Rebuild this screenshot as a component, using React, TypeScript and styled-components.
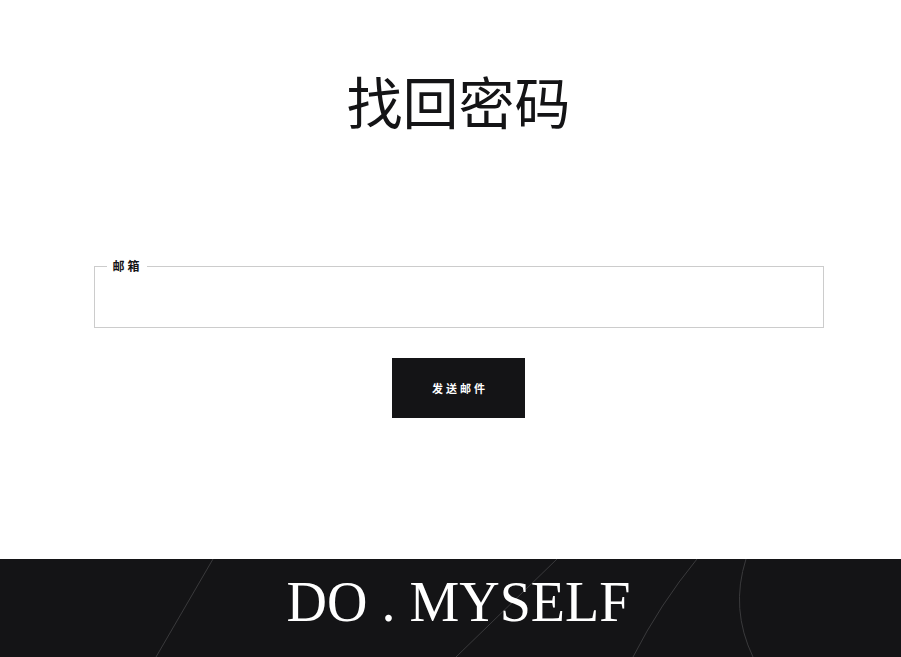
import React from "react";
import styled, { createGlobalStyle } from "styled-components";

const Global = createGlobalStyle`
  html, body { margin: 0; padding: 0; background: #ffffff; }
  body { font-family: "Noto Sans CJK SC", "Noto Sans", sans-serif; color: #141416; }
  * { box-sizing: border-box; }
`;

const Page = styled.div`
  display: flex;
  flex-direction: column;
  min-height: 657px;
`;

const Main = styled.main`
  display: flex;
  flex-direction: column;
  align-items: center;
  padding-left: 16px;
  height: 559px;
`;

const Title = styled.h1`
  margin: 72px 0 0;
  font-size: 56px;
  line-height: 56px;
  font-weight: 400;
  color: #141416;
`;

const Field = styled.fieldset`
  margin: 131px 0 0;
  width: 730px;
  height: 69px;
  border: 1px solid #cccccc;
  padding: 0 12px;
`;

const Legend = styled.legend`
  margin-left: 0;
  padding: 0 4px 0 6px;
  font-size: 12px;
  font-weight: 700;
  letter-spacing: 3px;
  line-height: 14px;
  color: #141416;
`;

const Input = styled.input`
  width: 100%;
  height: 44px;
  border: none;
  outline: none;
  background: transparent;
  font-size: 14px;
`;

const SendButton = styled.button`
  margin-top: 30px;
  width: 133px;
  height: 60px;
  border: none;
  background: #141416;
  color: #ffffff;
  font-family: "Noto Sans CJK SC", sans-serif;
  font-size: 11px;
  font-weight: 700;
  letter-spacing: 3px;
  padding: 0 0 0 3px;
  cursor: pointer;
`;

const Footer = styled.footer`
  position: relative;
  height: 98px;
  background: #141416;
  overflow: hidden;
  display: flex;
  justify-content: center;
  padding-left: 16px;
`;

const Deco = styled.svg`
  position: absolute;
  inset: 0;
  width: 100%;
  height: 100%;
`;

const Brand = styled.div`
  position: relative;
  margin-top: 11px;
  font-family: "Liberation Serif", "Times New Roman", serif;
  font-size: 56px;
  line-height: 64px;
  color: #ffffff;
`;

export default function App() {
  return (
    <Page>
      <Global />
      <Main>
        <Title>找回密码</Title>
        <Field>
          <Legend>邮箱</Legend>
          <Input type="email" />
        </Field>
        <SendButton>发送邮件</SendButton>
      </Main>
      <Footer>
        <Deco viewBox="0 0 901 98" preserveAspectRatio="none">
          <g fill="none" stroke="#3a3a3c" strokeWidth="1">
            <line x1="213" y1="0" x2="156" y2="98" />
            <line x1="557" y1="0" x2="456" y2="98" />
            <path d="M697 0 Q660 45 633 98" />
            <path d="M746 0 Q730 50 753 98" />
          </g>
        </Deco>
        <Brand>DO . MYSELF</Brand>
      </Footer>
    </Page>
  );
}
